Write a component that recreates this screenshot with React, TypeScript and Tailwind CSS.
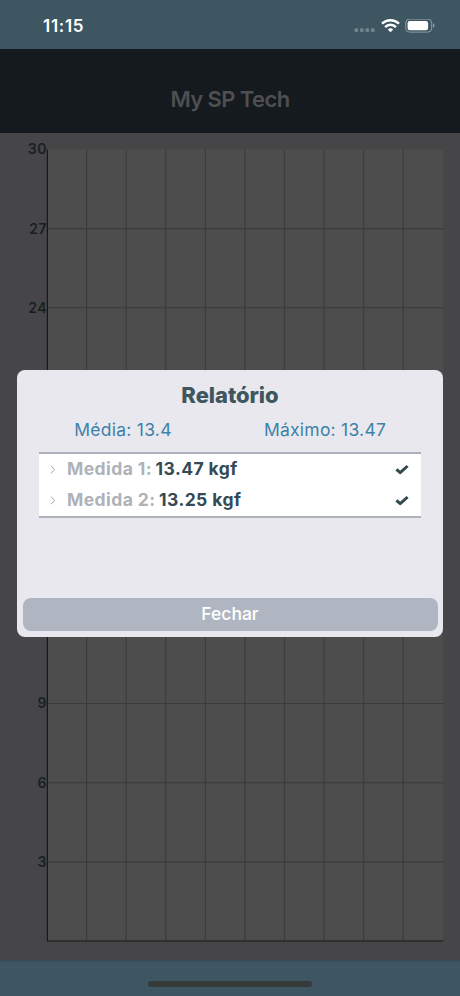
import { useState } from 'react';

type Measure = {
	id: number;
	value: number;
};

const measures: Measure[] = [
	{ id: 1, value: 13.47 },
	{ id: 2, value: 13.25 },
];

const CHART = { left: 47.4, right: 443.2, top: 16.5, bottom: 808 };
const COLUMNS = 10;
const MAX_VALUE = 30;
const STEP = 3;

function StatusBar() {
	return (
		<div className="flex h-[49px] shrink-0 items-start justify-between bg-[#3e5661] pl-[43px] pr-[25px] pt-[14px] text-white">
			<span className="text-[17px] font-semibold leading-6 tracking-[0.7px]">11:15</span>
			<div className="flex h-6 items-center gap-[5px]">
				<svg width="22" height="14" viewBox="0 0 22 14" fill="#71858e">
					<rect x="0.5" y="9.2" width="3.6" height="3.8" rx="1" />
					<rect x="6" y="9.2" width="3.6" height="3.8" rx="1" />
					<rect x="11.5" y="9.2" width="3.6" height="3.8" rx="1" />
					<rect x="17" y="9.2" width="3.6" height="3.8" rx="1" />
				</svg>
				<svg width="19" height="14" viewBox="0 0 19 14" fill="none" stroke="white" strokeWidth="2.5">
					<path d="M1 4.7a12.2 12.2 0 0 1 17 0" />
					<path d="M4.1 8.1a7.6 7.6 0 0 1 10.8 0" />
					<path d="M9.5 13.2 6.8 10.5a3.9 3.9 0 0 1 5.4 0Z" fill="white" stroke="none" />
				</svg>
				<svg width="30" height="14" viewBox="0 0 30 14" fill="none">
					<rect x="0.7" y="0.1" width="26" height="13" rx="3.8" stroke="#8f9da4" />
					<rect x="2.6" y="2" width="20.5" height="9.2" rx="2.2" fill="white" />
					<path d="M28 4.6v4.2c1-.4 1.6-1.2 1.6-2.1S29 5 28 4.6Z" fill="#8f9da4" />
				</svg>
			</div>
		</div>
	);
}

function Chart() {
	const width = CHART.right - CHART.left;
	const height = CHART.bottom - CHART.top;
	const columns = Array.from({ length: COLUMNS - 1 }, (_, i) => CHART.left - 0.4 + ((i + 1) * width) / COLUMNS);
	const values = Array.from({ length: MAX_VALUE / STEP }, (_, i) => MAX_VALUE - i * STEP);

	return (
		<svg width="460" height="827" viewBox="0 0 460 827" className="block shrink-0">
			<rect x={CHART.left} y={CHART.top} width={width} height={height} fill="#4d4d4d" />
			{columns.map((x) => (
				<line key={x} x1={x} x2={x} y1={CHART.top} y2={CHART.bottom} stroke="#393b3c" strokeWidth="1.1" />
			))}
			{values.map((value, i) => {
				const y = CHART.top + (i * height) / values.length;
				return (
					<g key={value}>
						{i > 0 && <line x1={CHART.left} x2={CHART.right} y1={y} y2={y} stroke="#393b3c" strokeWidth="1.1" />}
						<text x="47" y={y + 4.9} textAnchor="end" fill="#192022" fontSize="14" fontWeight="600" letterSpacing="0.5">
							{value}
						</text>
					</g>
				);
			})}
			<path d={`M${CHART.left} ${CHART.top}V${CHART.bottom}H${CHART.right}`} fill="none" stroke="#14191b" strokeWidth="1.2" />
		</svg>
	);
}

function Check() {
	return (
		<svg width="14" height="11" viewBox="0 0 14 11" fill="none" stroke="#344a4f" strokeWidth="3" strokeLinejoin="round">
			<path d="M1.4 5.3 5.2 8.7 12.6 2" />
		</svg>
	);
}

function MeasureRow({ id, value }: Measure) {
	return (
		<li className="flex h-[31px] items-center pl-[11px] pr-[12px]">
			<svg width="6" height="9" viewBox="0 0 6 9" fill="none" stroke="#a2a8b1">
				<path d="m.8.7 4 3.8-4 3.8" />
			</svg>
			<span className="ml-[11px] text-[17.5px] font-bold tracking-[0.42px] text-[#aeb2b9]">
				Medida {id}: <span className="-ml-px text-[#344a54]">{value} kgf</span>
			</span>
			<span className="ml-auto">
				<Check />
			</span>
		</li>
	);
}

function Report({ onClose }: { onClose: () => void }) {
	return (
		<div className="absolute inset-x-[17px] top-[370px] flex h-[267px] flex-col rounded-[8px] bg-[#e9e8ef] px-[5.5px] pb-[6px] pt-[11px]">
			<h2 className="text-center text-[22px] font-extrabold leading-7 tracking-[-0.05px] text-[#3f565f]">Relatório</h2>
			<div className="mt-[9px] flex text-[17.5px] leading-6 tracking-[0.25px] text-[#3d82a8]">
				<span className="w-[201px] text-center">Média: 13.4</span>
				<span className="w-[203px] text-center">Máximo: 13.47</span>
			</div>
			<ul className="mx-[16.5px] mt-[10px] border-y-2 border-[#acb1ba] bg-white">
				{measures.map((measure) => (
					<MeasureRow key={measure.id} {...measure} />
				))}
			</ul>
			<button
				type="button"
				onClick={onClose}
				className="mt-auto h-[33px] rounded-[8px] bg-[#b0b6c1] text-[17.5px] font-medium text-white"
			>
				Fechar
			</button>
		</div>
	);
}

export default function App() {
	const [open, setOpen] = useState<boolean>(true);

	return (
		<div className="relative flex h-[996px] w-[460px] flex-col overflow-hidden bg-[#464648] font-[Inter,sans-serif]">
			<StatusBar />
			<header className="flex h-[83.5px] shrink-0 items-center justify-center bg-[#141a1e] pt-[18px] text-[22px] font-semibold tracking-[-0.6px] text-[#4e4f50]">
				My SP Tech
			</header>
			<Chart />
			<footer className="flex grow items-end justify-center border-t-2 border-[#394c59] bg-[#3e5661] pb-[9px]">
				<span className="h-[6px] w-[164px] rounded-full bg-[#363a3a]" />
			</footer>
			{open && <Report onClose={() => setOpen(false)} />}
		</div>
	);
}
